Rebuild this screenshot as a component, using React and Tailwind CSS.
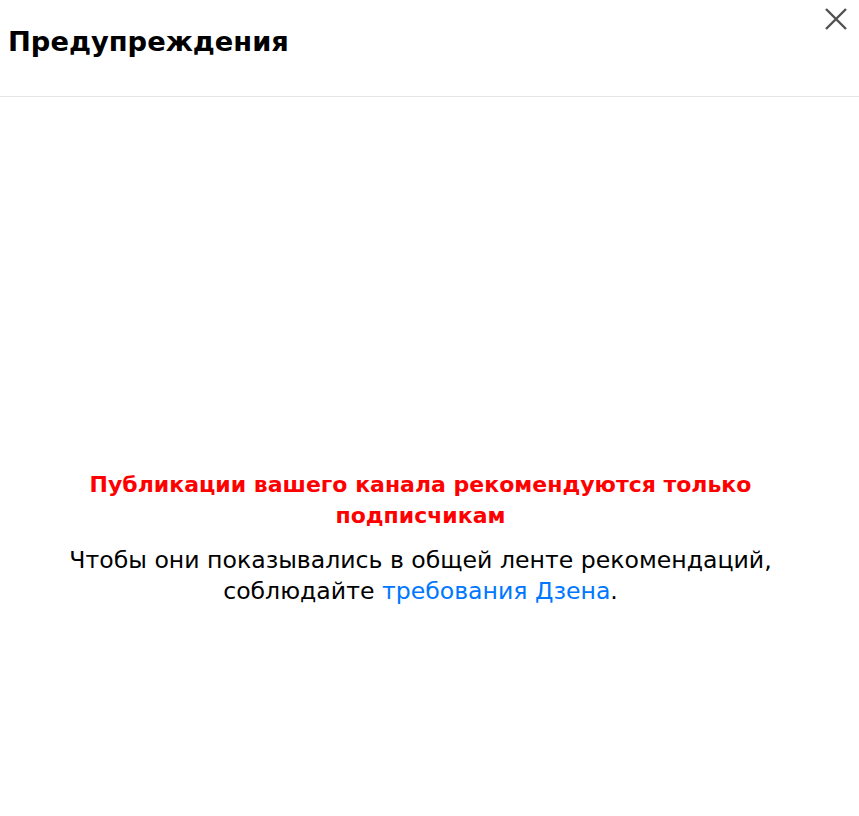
export default function App() {
  return (
    <div className="w-[859px] h-[816px] bg-white relative" style={{ fontFamily: '"DejaVu Sans", "Noto Sans", sans-serif' }}>
      <div className="h-[97px] border-b border-[#e5e5e5] flex items-start">
        <h1 className="pl-[8px] pt-[22px] text-[27.3px] leading-[40px] font-bold text-black">Предупреждения</h1>
      </div>
      <button className="absolute right-[10px] top-[6px] w-[26px] h-[26px] flex items-center justify-center">
        <svg width="24" height="24" viewBox="0 0 24 24" fill="none" stroke="#505050" strokeWidth="2.4">
          <path d="M2 2 L22 22 M22 2 L2 22" />
        </svg>
      </button>
      <div className="w-[841px] pt-[372px] flex flex-col items-center text-center">
        <div className="w-[780px] text-[22px] leading-[31px] font-bold text-[#ff0000]">
          Публикации вашего канала рекомендуются только подписчикам
        </div>
        <p className="w-[780px] mt-[14px] text-[23.6px] leading-[31px] text-black">
          Чтобы они показывались в общей ленте рекомендаций, соблюдайте <a className="text-[#0077ff]">требования Дзена</a>.
        </p>
      </div>
    </div>
  );
}
